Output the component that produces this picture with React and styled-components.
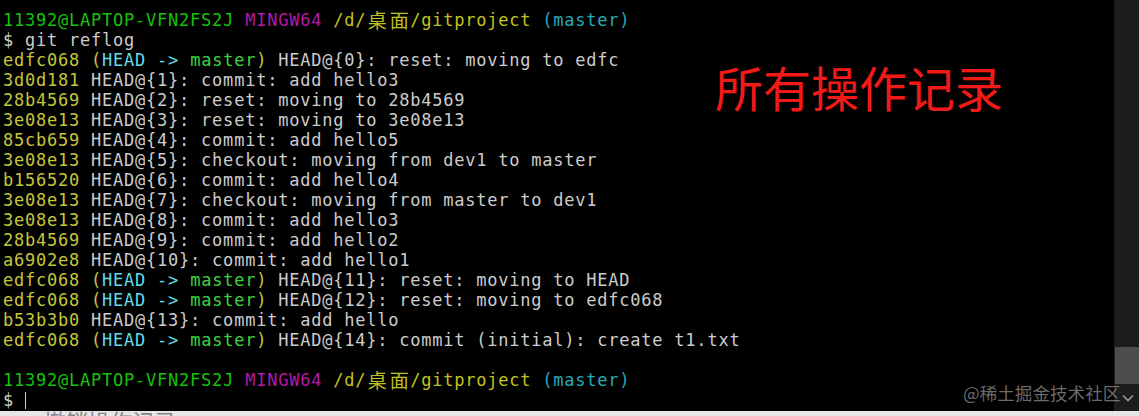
import React from "react";
import styled, { createGlobalStyle } from "styled-components";

const Global = createGlobalStyle`
  html, body { margin: 0; padding: 0; background: #000; }
  body { width: 1139px; height: 416px; overflow: hidden; }
`;

const C = {
  fg: "#cccccc",
  user: "#17c10f",
  host: "#b41aa8",
  path: "#c2c21c",
  branch: "#2aa8ba",
  hash: "#c6c63a",
  head: "#62dbe8",
  master: "#3fd23f",
};

const Page = styled.div`
  position: relative;
  width: 1139px;
  height: 416px;
  display: flex;
  flex-direction: column;
  overflow: hidden;
`;

const Window = styled.div`
  flex: 0 0 411px;
  display: flex;
  background: #000;
`;

const Screen = styled.div`
  flex: 1;
  padding: 10px 0 0 3px;
  font-family: "DejaVu Sans Mono", monospace;
  font-size: 17px;
  letter-spacing: 0.77px;
  line-height: 20px;
  color: ${C.fg};
  white-space: pre;
`;

const Line = styled.div`
  height: 20px;
`;

const Seg = styled.span`
  color: ${(p) => p.$c || C.fg};
`;

const Wide = styled.span`
  display: inline-block;
  width: 22px;
  text-align: center;
  font-family: "Noto Sans CJK SC", serif;
  font-size: 19px;
  letter-spacing: 0;
  vertical-align: top;
  line-height: 20px;
`;

const Cursor = styled.span`
  display: inline-block;
  width: 1px;
  height: 17px;
  background: #d0d0d0;
  vertical-align: -3px;
`;

const Scrollbar = styled.div`
  flex: 0 0 25px;
  background: #1c1c1c;
  display: flex;
  flex-direction: column;
  justify-content: flex-end;
`;

const Thumb = styled.div`
  height: 37px;
  margin-left: 1px;
  background: #4d4d4d;
`;

const ArrowBtn = styled.div`
  height: 27px;
  display: flex;
  align-items: center;
  justify-content: center;
  padding-left: 2px;
`;

const Bottom = styled.div`
  flex: 0 0 5px;
  background: #e6e6e6;
  overflow: hidden;
  font-family: "Noto Sans CJK SC", sans-serif;
  font-size: 22px;
  line-height: 22px;
  color: #444;
  padding-left: 44px;
  white-space: nowrap;
`;

const BottomText = styled.div`
  margin-top: -2px;
  opacity: 0.6;
`;

const Note = styled.div`
  position: absolute;
  left: 715px;
  top: 62px;
  font-family: "Noto Sans CJK SC", sans-serif;
  font-size: 48px;
  line-height: 48px;
  color: #f21a17;
  white-space: nowrap;
`;

const Watermark = styled.div`
  position: absolute;
  left: 963px;
  top: 381px;
  font-family: "Noto Sans CJK SC", sans-serif;
  font-size: 17.6px;
  line-height: 24px;
  color: rgba(180, 180, 180, 0.6);
  white-space: nowrap;
`;

const Prompt = () => (
  <Line>
    <Seg $c={C.user}>11392@LAPTOP-VFN2FS2J</Seg>{" "}
    <Seg $c={C.host}>MINGW64</Seg>{" "}
    <Seg $c={C.path}>
      /d/<Wide>桌</Wide><Wide>面</Wide>/gitproject
    </Seg>{" "}
    <Seg $c={C.branch}>(master)</Seg>
  </Line>
);

const entries = [
  ["edfc068", true, "HEAD@{0}: reset: moving to edfc"],
  ["3d0d181", false, "HEAD@{1}: commit: add hello3"],
  ["28b4569", false, "HEAD@{2}: reset: moving to 28b4569"],
  ["3e08e13", false, "HEAD@{3}: reset: moving to 3e08e13"],
  ["85cb659", false, "HEAD@{4}: commit: add hello5"],
  ["3e08e13", false, "HEAD@{5}: checkout: moving from dev1 to master"],
  ["b156520", false, "HEAD@{6}: commit: add hello4"],
  ["3e08e13", false, "HEAD@{7}: checkout: moving from master to dev1"],
  ["3e08e13", false, "HEAD@{8}: commit: add hello3"],
  ["28b4569", false, "HEAD@{9}: commit: add hello2"],
  ["a6902e8", false, "HEAD@{10}: commit: add hello1"],
  ["edfc068", true, "HEAD@{11}: reset: moving to HEAD"],
  ["edfc068", true, "HEAD@{12}: reset: moving to edfc068"],
  ["b53b3b0", false, "HEAD@{13}: commit: add hello"],
  ["edfc068", true, "HEAD@{14}: commit (initial): create t1.txt"],
];

const Entry = ({ hash, head, msg }) => (
  <Line>
    <Seg $c={C.hash}>{hash}</Seg>{" "}
    {head && (
      <>
        <Seg $c={C.hash}>(</Seg>
        <Seg $c={C.head}>HEAD -&gt; </Seg>
        <Seg $c={C.master}>master</Seg>
        <Seg $c={C.hash}>)</Seg>{" "}
      </>
    )}
    <Seg>{msg}</Seg>
  </Line>
);

export default function App() {
  return (
    <>
      <Global />
      <Page>
        <Window>
          <Screen>
            <Prompt />
            <Line>$ git reflog</Line>
            {entries.map(([h, hd, m], i) => (
              <Entry key={i} hash={h} head={hd} msg={m} />
            ))}
            <Line />
            <Prompt />
            <Line>
              ${" "}
              <Cursor />
            </Line>
          </Screen>
          <Scrollbar>
            <Thumb />
            <ArrowBtn>
              <svg width="12" height="8" viewBox="0 0 12 8">
                <path d="M1 1.5 L6 6.5 L11 1.5" fill="none" stroke="#9a9a9a" strokeWidth="1.6" />
              </svg>
            </ArrowBtn>
          </Scrollbar>
        </Window>
        <Bottom>
          <BottomText>撤销操作记录</BottomText>
        </Bottom>
        <Note>所有操作记录</Note>
        <Watermark>@稀土掘金技术社区</Watermark>
      </Page>
    </>
  );
}
